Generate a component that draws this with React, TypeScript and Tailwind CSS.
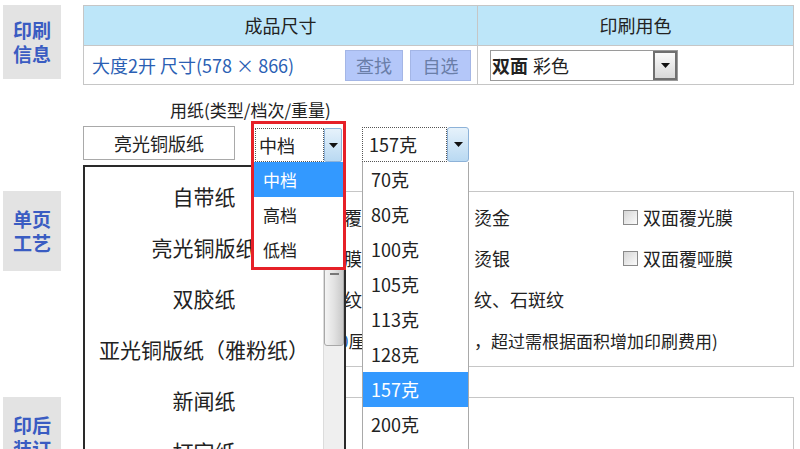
import React from "react"

const font = { fontFamily: '"Noto Sans CJK SC", "Noto Sans", sans-serif' }

function Arrow() {
  return (
    <svg width="9" height="5" viewBox="0 0 9 5">
      <path d="M0 0h9L4.5 5z" fill="#111" />
    </svg>
  )
}

function Label({ lines, h }: { lines: string[]; h: string }) {
  return (
    <div className={`w-[58px] ${h} shrink-0 bg-[#e3e3e3] flex flex-col items-center justify-center text-[19px] font-bold leading-[24px] text-[#3a5cc2]`}>
      {lines.map(l => <div key={l}>{l}</div>)}
    </div>
  )
}

function Check({ text }: { text: string }) {
  return (
    <div className="flex items-center gap-[5px]">
      <span className="w-[15px] h-[15px] border border-[#8a8a8a] bg-gradient-to-br from-[#d6d6d6] to-[#fbfbfb]" />
      <span className="text-[18px]">{text}</span>
    </div>
  )
}

export default function App() {
  const papers = ["自带纸", "亮光铜版纸", "双胶纸", "亚光铜版纸（雅粉纸）", "新闻纸", "打字纸"]
  const weights = ["70克", "80克", "100克", "105克", "113克", "128克", "157克", "200克", "250克"]
  const grades = ["中档", "高档", "低档"]

  return (
    <div className="relative w-[800px] h-[449px] overflow-hidden bg-white text-[#222]" style={font}>
      {/* 印刷信息 */}
      <div className="flex pt-[5px] pl-[3px]">
        <Label lines={["印刷", "信息"]} h="h-[74px]" />
        <div className="ml-[22px] w-[711px] border border-[#c6c6c6] text-[18px]">
          <div className="grid grid-cols-[394px_1fr] h-[39px] bg-[#bde6f9]">
            <div className="flex items-center justify-center border-r border-[#c6c6c6]">成品尺寸</div>
            <div className="flex items-center justify-center">印刷用色</div>
          </div>
          <div className="grid grid-cols-[394px_1fr] h-[39px] border-t border-[#c6c6c6]">
            <div className="flex items-center pl-[8px] border-r border-[#c6c6c6]">
              <span className="text-[#2b5fb4]">大度2开 尺寸(578 × 866)</span>
              <span className="ml-auto w-[58px] h-[31px] bg-[#b4c7f9] border border-[#a4b6e6] flex items-center justify-center text-[#6a7ea8]">查找</span>
              <span className="ml-[7px] mr-[6px] w-[61px] h-[31px] bg-[#b4c7f9] border border-[#a4b6e6] flex items-center justify-center text-[#6a7ea8]">自选</span>
            </div>
            <div className="flex items-center pl-[12px]">
              <div className="w-[188px] h-[31px] border border-[#9a9a9a] flex items-center">
                <span className="pl-[1px] font-bold">双面</span>
                <span className="ml-[5px]">彩色</span>
                <span className="ml-auto w-[24px] h-full border-2 border-[#6f6f6f] bg-gradient-to-b from-[#fafafa] to-[#d8d8d8] flex items-center justify-center">
                  <Arrow />
                </span>
              </div>
            </div>
          </div>
        </div>
      </div>

      {/* 用纸 */}
      <div className="pl-[170px] pt-[15px] h-[36px] text-[17px] leading-[20px]">用纸(类型/档次/重量)</div>
      <div className="relative h-[42px] pl-[83px] flex items-start text-[17px]">
        <div className="mt-[5px] w-[152px] h-[34px] border border-[#a9a9a9] flex items-center justify-center text-[18px]">亮光铜版纸</div>

        {/* 纸张列表 */}
        <div className="absolute left-[83px] top-[44px] z-10 w-[263px] h-[300px] border-2 border-[#2a2a2a] bg-white flex">
          <div className="flex-1 pt-[4px] text-[21px]">
            {papers.map(p => (
              <div key={p} className="h-[51px] flex items-center justify-center whitespace-nowrap">{p}</div>
            ))}
          </div>
          <div className="w-[21px] bg-[#efefef] border-l border-[#dcdcdc] pt-[101px]">
            <div className="h-[78px] rounded-[3px] border border-[#a8a8a8] bg-gradient-to-r from-[#f4f4f4] via-[#e2e2e2] to-[#c9c9c9] pt-[4px] flex justify-center">
              <span className="w-[9px] h-[2px] bg-[#777]" />
            </div>
          </div>
        </div>

        {/* 档次 */}
        <div className="absolute left-[251px] top-0 z-20 w-[95px] border-[3px] border-[#e62028] bg-white">
          <div className="mt-[4px] ml-[1px] mr-[1px] h-[34px] flex">
            <div className="flex-1 border border-dotted border-[#555] flex items-center pl-[3px] text-[18px]">中档</div>
            <div className="w-[18px] border border-[#8db2d8] rounded-[2px] bg-gradient-to-b from-[#e6f2fb] to-[#b9d9f2] flex items-center justify-center">
              <Arrow />
            </div>
          </div>
          {grades.map((g, i) => (
            <div key={g} className={`h-[35px] flex items-center pl-[9px] ${i === 0 ? "bg-[#3399ff] text-white" : ""}`}>{g}</div>
          ))}
        </div>

        {/* 重量 */}
        <div className="absolute left-[362px] top-[6px] z-20 w-[107px] text-[18px]">
          <div className="h-[35px] flex">
            <div className="flex-1 border border-dotted border-[#555] flex items-center pl-[6px]">157克</div>
            <div className="w-[22px] border border-[#8db2d8] rounded-[3px] bg-gradient-to-b from-[#e6f2fb] to-[#b9d9f2] flex items-center justify-center">
              <Arrow />
            </div>
          </div>
          <div className="border border-[#a9a9a9] border-t-0 bg-white">
            {weights.map(w => (
              <div key={w} className={`h-[35px] flex items-center pl-[8px] ${w === "157克" ? "bg-[#3399ff] text-white" : ""}`}>{w}</div>
            ))}
          </div>
        </div>
      </div>

      {/* 单页工艺 */}
      <div className="flex pl-[3px] pt-[28px]">
        <Label lines={["单页", "工艺"]} h="h-[80px]" />
        <div className="ml-[22px] w-[711px] h-[176px] border border-[#c6c6c6] pt-[5px] text-[18px]">
          <div className="h-[41px] flex items-center">
            <span className="w-[260px]" />
            <span className="w-[130px]">覆哑膜</span>
            <span className="w-[149px]">烫金</span>
            <Check text="双面覆光膜" />
          </div>
          <div className="h-[41px] flex items-center">
            <span className="w-[260px]" />
            <span className="w-[130px]">膜-</span>
            <span className="w-[149px]">烫银</span>
            <Check text="双面覆哑膜" />
          </div>
          <div className="h-[41px] flex items-center">
            <span className="w-[260px]" />
            <span className="w-[130px]">纹</span>
            <span>纹、石斑纹</span>
          </div>
          <div className="h-[41px] flex items-center text-[17px]">
            <span className="w-[255px]" />
            <span className="w-[135px] text-[#2b5fb4]">0<span className="text-[#222]">厘米</span></span>
            <span>，超过需根据面积增加印刷费用)</span>
          </div>
        </div>
      </div>

      {/* 印后 */}
      <div className="flex pl-[3px] pt-[30px]">
        <Label lines={["印后", "装订"]} h="h-[80px]" />
        <div className="ml-[22px] w-[711px] h-[80px] border border-[#c6c6c6]" />
      </div>
    </div>
  )
}
